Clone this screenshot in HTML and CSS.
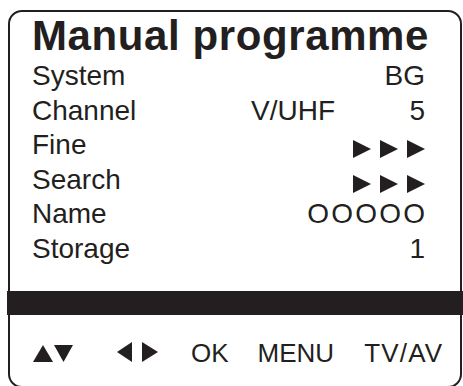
FILE: index.html
```html
<html>
<head>
<link rel="stylesheet" href="styles.css">
<title>Manual programme</title>
</head>
<body>
<div class="screen">
  <h1 class="title">Manual programme</h1>

  <div class="rows">
    <div class="row"><span>System</span><span class="val">BG</span></div>
    <div class="row"><span>Channel</span><span class="mid">V/UHF</span><span class="val">5</span></div>
    <div class="row"><span>Fine</span>
      <svg class="val tri" width="72" height="18" viewBox="0 0 72 18">
        <polygon points="0,0 18,9 0,18"/><polygon points="27,0 45,9 27,18"/><polygon points="54,0 72,9 54,18"/>
      </svg>
    </div>
    <div class="row"><span>Search</span>
      <svg class="val tri" width="72" height="18" viewBox="0 0 72 18">
        <polygon points="0,0 18,9 0,18"/><polygon points="27,0 45,9 27,18"/><polygon points="54,0 72,9 54,18"/>
      </svg>
    </div>
    <div class="row"><span>Name</span><span class="val name">OOOOO</span></div>
    <div class="row"><span>Storage</span><span class="val">1</span></div>
  </div>

  <div class="bar"></div>

  <div class="keys">
    <svg class="updown" width="40" height="17" viewBox="0 0 40 17">
      <polygon points="0,17 10,0 20,17"/><polygon points="21,0 40,0 30.5,17"/>
    </svg>
    <svg class="leftright" width="41" height="20" viewBox="0 0 41 20">
      <polygon points="15,0 15,20 0,10"/><polygon points="25,0 41,10 25,20"/>
    </svg>
    <span class="ok">OK</span>
    <span class="menu">MENU</span>
    <span class="tvav">TV/AV</span>
  </div>
</div>
</body>
</html>
```

FILE: styles.css
```css
body {
    margin: 0;
    background: #fff;
    color: #231f20;
    font-family: "Liberation Sans", Arial, sans-serif;
}

.screen {
    box-sizing: border-box;
    width: 454px;
    height: 378px;
    margin: 10px 0 0 8px;
    padding-top: 3px;
    border: 2px solid #231f20;
    border-radius: 14px;
}

.title {
    margin: 0 0 2px;
    padding-left: 22px;
    font-size: 42px;
    line-height: 42px;
    font-weight: bold;
    letter-spacing: 0.6px;
}

.rows {
    padding: 0 35px 0 22px;
}

.row {
    display: grid;
    grid-template-columns: 1fr auto 90px;
    font-size: 28px;
    line-height: 34.6px;
}

.mid {
    grid-column: 2;
}

.val {
    grid-column: 3;
    justify-self: end;
}

.tri {
    display: block;
    margin-top: 12px;
    fill: #231f20;
}

.name {
    letter-spacing: 2.2px;
    margin-right: -2.2px;
}

.bar {
    height: 24px;
    margin: 24px -3px 0;
    background: #231f20;
}

.keys {
    display: flex;
    align-items: flex-start;
    margin-top: 25px;
    padding-left: 23px;
    font-size: 26px;
    line-height: 26px;
}

.keys svg {
    display: block;
    fill: #231f20;
}

.updown {
    margin-top: 5px;
}

.leftright {
    margin-top: 2px;
    margin-left: 44px;
}

.ok {
    margin-left: 33px;
}

.menu {
    margin-left: 29px;
}

.tvav {
    margin-left: 30px;
    letter-spacing: 1.2px;
}
```
